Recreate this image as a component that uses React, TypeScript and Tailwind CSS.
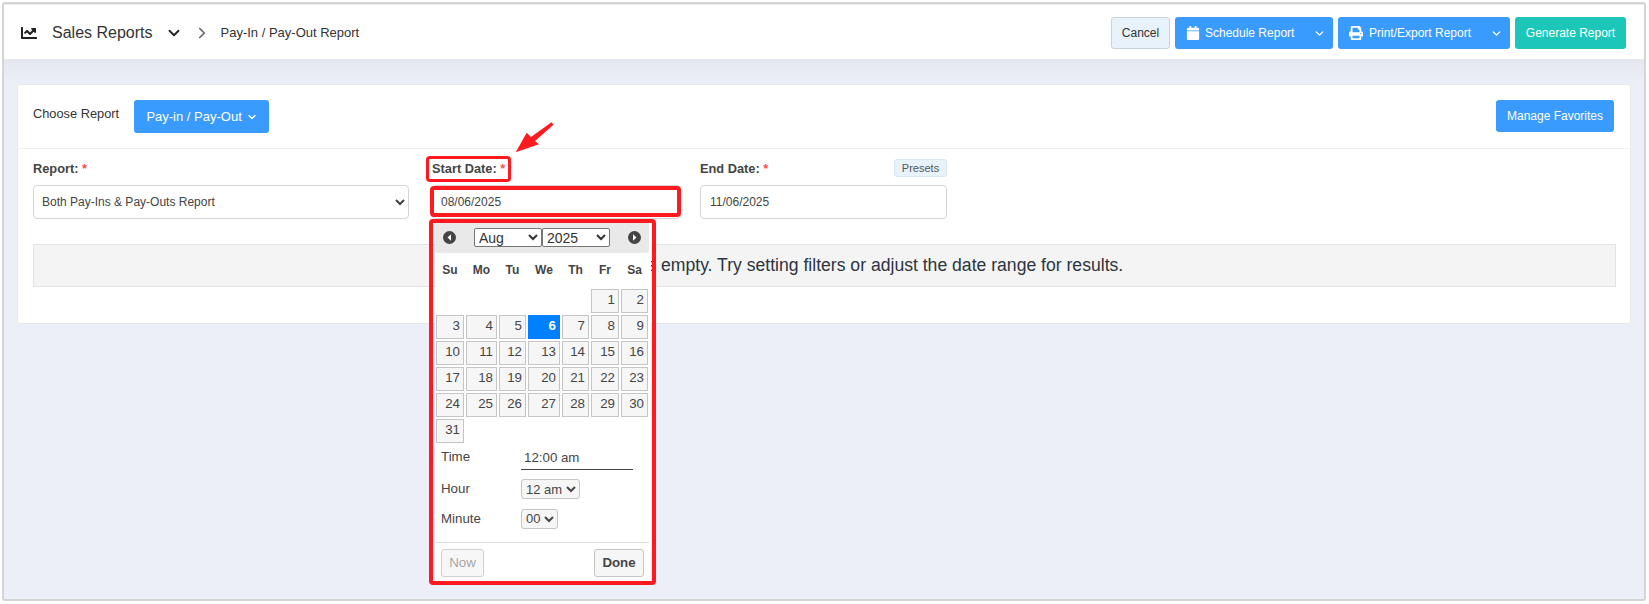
import { ChevronDown, ChevronRight } from "lucide-react";
import { FaCalendar, FaChartLine, FaPrint } from "react-icons/fa";

const font = "font-['Liberation_Sans',Arial,sans-serif]";

const colClass = "grid grid-cols-[28px_31px_27px_32px_27px_28px_27px] gap-x-[2px] gap-y-[2px]";

const weekDays = ["Su", "Mo", "Tu", "We", "Th", "Fr", "Sa"];

function buildDays() {
  const days: (number | null)[] = Array(5).fill(null);
  for (let d = 1; d <= 31; d++) days.push(d);
  return days;
}

function RoundArrow({ dir }: { dir: "left" | "right" }) {
  return (
    <svg width="13" height="13" viewBox="0 0 13 13">
      <circle cx="6.5" cy="6.5" r="6.5" fill="#454545" />
      {dir === "left" ? <path d="M8 3.2 4.5 6.5 8 9.8z" fill="#fff" /> : <path d="M5 3.2 8.5 6.5 5 9.8z" fill="#fff" />}
    </svg>
  );
}

function SplitButton({ icon, label, width }: { icon: React.ReactNode; label: string; width: string }) {
  return (
    <button className={`${width} flex h-[32px] items-center rounded-[3px] bg-[#3a9bff] text-[12px] text-white`}>
      <span className="flex flex-1 items-center pl-[11px]">
        {icon}
        {label}
      </span>
      <span className="flex w-[28px] justify-center">
        <ChevronDown size={13} strokeWidth={2.5} />
      </span>
    </button>
  );
}

function DatePicker() {
  return (
    <div className="absolute left-[3px] top-[63px] z-10 h-[362px] w-[216px] bg-white text-[#454545]">
      <div className="flex h-[31px] w-[214px] items-center rounded-[3px] bg-[#e9e9e9] pl-[8px] pr-[8px]">
        <RoundArrow dir="left" />
        <select defaultValue="Aug" className="ml-[18px] h-[19px] w-[68px] rounded-[2px] border border-[#767676] bg-white text-[14px] leading-none text-[#333]">
          <option>Aug</option>
        </select>
        <select defaultValue="2025" className="h-[19px] w-[68px] rounded-[2px] border border-[#767676] bg-white text-[14px] leading-none text-[#333]">
          <option>2025</option>
        </select>
        <span className="ml-auto">
          <RoundArrow dir="right" />
        </span>
      </div>

      <div className={`${colClass} mt-[7px] ml-[1px] h-[25px] text-center text-[12px] font-bold leading-[20px] text-[#444]`}>
        {weekDays.map((d) => (
          <span key={d}>{d}</span>
        ))}
      </div>

      <div className={`${colClass} ml-[1px] mt-[4px] auto-rows-[24px]`}>
        {buildDays().map((d, i) =>
          d === null ? (
            <span key={i} />
          ) : d === 6 ? (
            <span key={i} className="border border-transparent bg-[#007fff] pr-[3px] pt-[1px] text-right text-[13.3px] font-bold leading-[18px] text-white">
              {d}
            </span>
          ) : (
            <span key={i} className="border border-[#c5c5c5] bg-[#f6f6f6] pr-[3px] pt-[1px] text-right text-[13.3px] leading-[18px] text-[#454545]">
              {d}
            </span>
          )
        )}
      </div>

      <div className="mt-[2px] ml-[6px] flex h-[29px] items-center text-[13.3px]">
        <span className="w-[80px] -mt-[5px]">Time</span>
        <span className="h-[21px] w-[112px] border-b border-[#444] pl-[3px] text-[13.3px] leading-[18px]">12:00 am</span>
      </div>
      <div className="ml-[6px] flex h-[30px] items-center text-[13.3px]">
        <span className="w-[80px]">Hour</span>
        <select defaultValue="12 am" className="h-[20px] w-[59px] rounded-[3px] border border-[#c5c5c5] bg-[#f6f6f6] text-[13px] leading-none">
          <option>12 am</option>
        </select>
      </div>
      <div className="ml-[6px] flex h-[29px] items-center text-[13.3px]">
        <span className="w-[80px]">Minute</span>
        <select defaultValue="00" className="h-[20px] w-[37px] rounded-[3px] border border-[#c5c5c5] bg-[#f6f6f6] text-[13px] leading-none">
          <option>00</option>
        </select>
      </div>

      <div className="mt-[9px] flex h-[35px] w-[214px] items-end justify-between border-t border-[#ddd] pl-[6px] pr-[5px]">
        <button className="h-[28px] w-[43px] rounded-[3px] border border-[#c5c5c5] bg-[#f6f6f6] text-[13.3px] text-[#8f8f8f] opacity-80">Now</button>
        <button className="h-[28px] w-[50px] rounded-[3px] border border-[#c5c5c5] bg-[#f6f6f6] text-[13.3px] font-bold text-[#454545]">Done</button>
      </div>
    </div>
  );
}

export default function App() {
  return (
    <div className={`${font} relative flex h-[604px] w-[1649px] flex-col overflow-hidden bg-white pb-[3px] pl-[2px] pr-[3px] pt-[2px] text-[#333]`}>
      <div className="flex flex-1 flex-col rounded-[3px] border-2 border-[#d4d4d4]">
        <header className="flex h-[55px] items-center justify-between border-t border-[#eee] bg-white pl-[17px] pr-[18px] pt-[2px]">
          <div className="flex items-center">
            <FaChartLine size={16} className="text-[#222]" />
            <span className="ml-[15px] text-[16px] text-[#333]">Sales Reports</span>
            <ChevronDown size={18} strokeWidth={2.5} className="ml-[12px] text-[#222]" />
            <ChevronRight size={18} strokeWidth={2.25} className="ml-[10px] text-[#666]" />
            <span className="ml-[10px] text-[13px] text-[#333]">Pay-In / Pay-Out Report</span>
          </div>
          <div className="flex items-center gap-[5px]">
            <button className="h-[32px] w-[59px] rounded-[3px] border border-[#c9d3dc] bg-[#e8f2fb] text-[12px] text-[#333]">Cancel</button>
            <SplitButton width="w-[158px]" label="Schedule Report" icon={<FaCalendar size={14} className="mr-[5px]" />} />
            <SplitButton width="w-[172px]" label="Print/Export Report" icon={<FaPrint size={14} className="mr-[6px]" />} />
            <button className="h-[32px] w-[111px] rounded-[3px] bg-[#1cc7b9] text-[12px] text-white">Generate Report</button>
          </div>
        </header>

        <main className="flex-1 bg-[#eceff7] bg-gradient-to-b from-[#e5e6f0] to-[#eceff7] bg-[length:100%_24px] bg-no-repeat px-[13px] pt-[25px]">
          <section className="h-[240px] rounded-[3px] border border-[#e6e8ee] bg-white">
            <div className="flex h-[64px] items-start justify-between border-b border-[#eee] pl-[15px] pr-[16px] pt-[15px]">
              <div className="flex items-start">
                <span className="mt-[4px] text-[12.8px] font-medium text-[#333]">Choose Report</span>
                <button className="ml-[15px] flex h-[33px] w-[135px] items-center justify-center gap-[4px] rounded-[3px] bg-[#3a9bff] pl-[1px] text-[13px] text-white">
                  Pay-in / Pay-Out
                  <ChevronDown size={12} strokeWidth={2.5} />
                </button>
              </div>
              <button className="h-[32px] w-[118px] rounded-[3px] bg-[#3a9bff] text-[12px] text-white">Manage Favorites</button>
            </div>

            <div className="flex pl-[15px] pt-[10px]">
              <div className="w-[376px]">
                <label className="block h-[26px] text-[12.8px] font-bold leading-[20px] text-[#444]">
                  Report: <span className="text-[#ff4d4f]">*</span>
                </label>
                <select defaultValue="both" className="h-[34px] w-full rounded-[4px] border border-[#d5d5d5] bg-white pl-[4px] text-[12px] text-[#444]">
                  <option value="both">Both Pay-Ins &amp; Pay-Outs Report</option>
                </select>
              </div>
              <div className="relative ml-[23px] w-[249px]">
                <label className="block h-[26px] text-[12.8px] font-bold leading-[20px] text-[#444]">
                  Start Date: <span className="text-[#ff4d4f]">*</span>
                </label>
                <input readOnly value="08/06/2025" className="h-[34px] w-full rounded-[4px] border border-[#d5d5d5] bg-white pl-[8px] text-[12px] text-[#444]" />
                <DatePicker />
              </div>
              <div className="ml-[19px] w-[247px]">
                <div className="flex h-[26px] items-start justify-between">
                  <label className="text-[12.8px] font-bold leading-[20px] text-[#444]">
                    End Date: <span className="text-[#ff4d4f]">*</span>
                  </label>
                  <span className="h-[18px] w-[53px] rounded-[3px] border border-[#dbe5ee] bg-[#e8f2fb] text-center text-[11px] leading-[16px] text-[#555]">Presets</span>
                </div>
                <input readOnly value="11/06/2025" className="h-[34px] w-full rounded-[4px] border border-[#d5d5d5] bg-white pl-[9px] text-[12px] text-[#444]" />
              </div>
            </div>

            <div className="ml-[15px] mr-[14px] mt-[25px] h-[43px] border border-[#e3e3e3] bg-[#f4f4f4] text-center text-[17.6px] leading-[41px] text-[#2c3440]">
              Your report list is empty. Try setting filters or adjust the date range for results.
            </div>
          </section>
        </main>
      </div>

      {/* red markup drawn over the screenshot */}
      <div className="pointer-events-none absolute left-[426px] top-[156px] z-20 h-[26px] w-[85px] rounded-[4px] border-[3px] border-[#ff1a1f]" />
      <div className="pointer-events-none absolute left-[430px] top-[186px] z-20 h-[31px] w-[251px] rounded-[4px] border-[4px] border-[#ff1a1f]" />
      <div className="pointer-events-none absolute left-[429px] top-[219px] z-20 h-[366px] w-[227px] rounded-[4px] border-[4px] border-[#ff1a1f]" />
      <svg className="pointer-events-none absolute left-[510px] top-[118px] z-20" width="48" height="38" viewBox="0 0 48 38">
        <path d="M5.7 34.3 16.7 14.7 21 19 41.5 4.3 43.5 6.8 25 23 29 26.3z" fill="#ff1a1f" />
      </svg>
    </div>
  );
}
